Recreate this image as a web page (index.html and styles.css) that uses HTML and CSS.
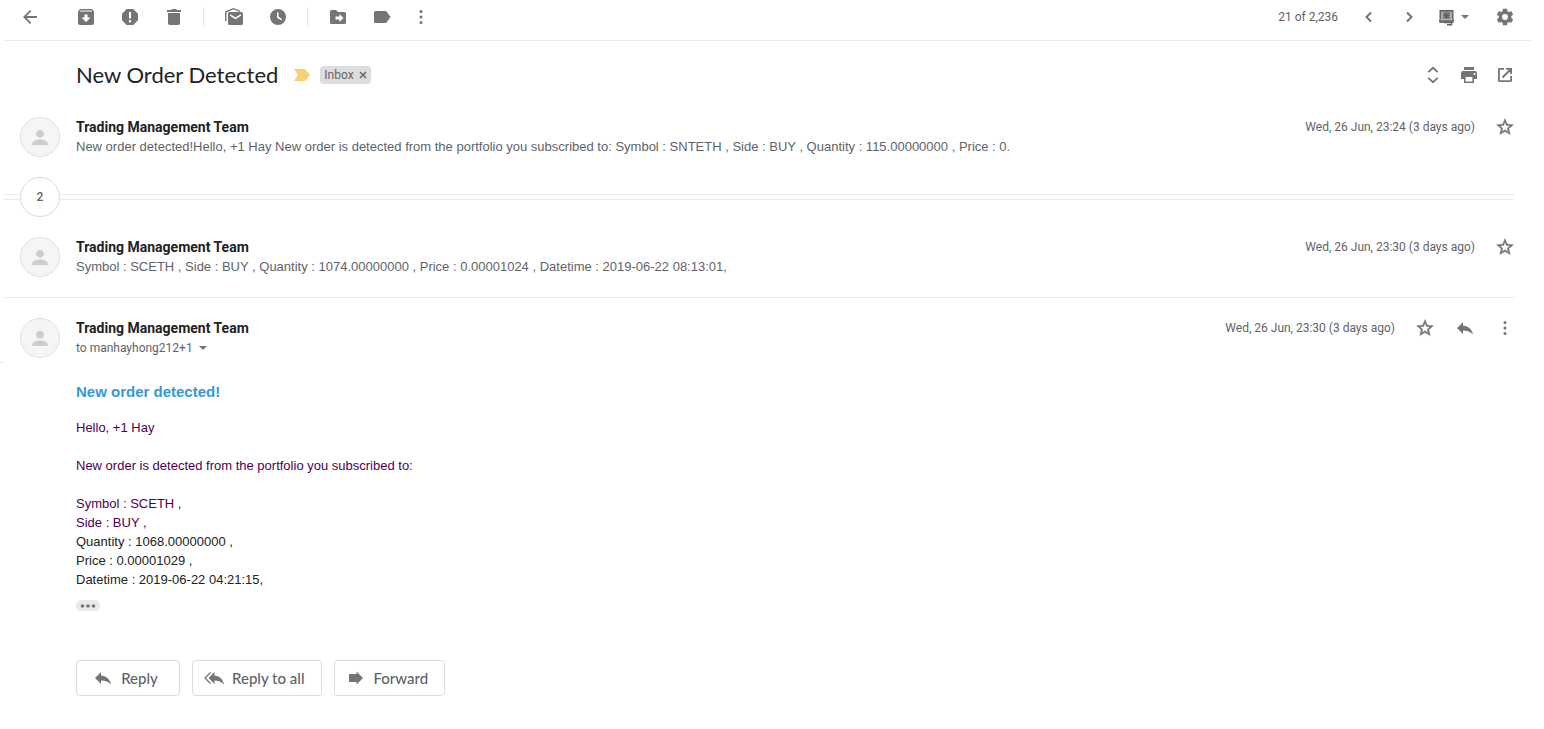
FILE: index.html
```html
<!DOCTYPE html>
<html lang="en">
<head>
  <meta charset="UTF-8" />
  <meta name="viewport" content="width=device-width, initial-scale=1" />
  <title>New Order Detected</title>
  <link rel="stylesheet" href="styles.css">
</head>
<body>
  <!-- shared icons -->
  <svg class="sprite" aria-hidden="true">
    <symbol id="star" viewBox="0 0 24 24"><path stroke="#757575" stroke-width=".6" d="M22 9.240l-7.190-.62L12 2 9.190 8.630 2 9.240l5.460 4.730L5.820 21 12 17.270 18.180 21l-1.630-7.030L22 9.240zM12 15.400l-3.760 2.270 1-4.280-3.320-2.880 4.380-.38L12 6.100l1.710 4.040 4.380.38-3.320 2.880 1 4.280L12 15.400z"/></symbol>
    <symbol id="reply" viewBox="0 0 20 20"><path d="M8 7.500V4L2 10l6 6v-3.600c4.300 0 7.500 1.100 10 4.100-1-4.500-3.700-8.300-10-9z"/></symbol>
    <symbol id="dots" viewBox="0 0 20 20"><circle cx="10" cy="4.500" r="1.500"/><circle cx="10" cy="10" r="1.500"/><circle cx="10" cy="15.500" r="1.500"/></symbol>
    <symbol id="caret" viewBox="0 0 8 4"><path d="M0 0h8L4 4z"/></symbol>
    <symbol id="person" viewBox="0 0 40 40"><circle cx="20" cy="16.500" r="4"/><path d="M12 28.500v-2c0-2.700 5-4 8-4s8 1.300 8 4v2z"/></symbol>
  </svg>

  <header class="toolbar">
    <button class="icon-btn back" aria-label="Back"><svg viewBox="0 0 20 20"><path d="M17 9H6.600l4.700-4.700L10 3l-7 7 7 7 1.300-1.300L6.600 11H17z"/></svg></button>
    <div class="group">
      <button class="icon-btn" aria-label="Archive"><svg viewBox="0 0 20 20"><path fill-rule="evenodd" d="M4 2h12l2 2.500V16a2 2 0 0 1-2 2H4a2 2 0 0 1-2-2V4.500zM4.300 3.500l-.6.9h12.600l-.6-.9zM8.500 7.500v3H5.500L10 15l4.500-4.500h-3v-3z"/></svg></button>
      <button class="icon-btn" aria-label="Report spam"><svg viewBox="0 0 20 20"><path fill-rule="evenodd" d="M6.700 2h6.600L18 6.700v6.600L13.300 18H6.700L2 13.300V6.700zM9 5v6.500h2V5zM10 13a1.300 1.300 0 1 0 0 2.600 1.300 1.300 0 0 0 0-2.600z"/></svg></button>
      <button class="icon-btn" aria-label="Delete"><svg viewBox="0 0 20 20"><path d="M3 3h4l1-1h4l1 1h4v2H3zM4 6h12v10a2 2 0 0 1-2 2H6a2 2 0 0 1-2-2z"/></svg></button>
    </div>
    <div class="group">
      <button class="icon-btn" aria-label="Mark as unread"><svg viewBox="0 0 20 20"><path d="M5.500 5h12A1.500 1.500 0 0 1 19 6.500v10a1.500 1.500 0 0 1-1.500 1.500h-12A1.500 1.500 0 0 1 4 16.500v-10A1.500 1.500 0 0 1 5.500 5z"/><path fill="none" stroke="#fff" stroke-width="1.500" d="M6 7.800l5.500 3.600L17 7.800"/><path fill="none" stroke="#757575" stroke-width="1.400" d="M1.800 14V4.800L9.500 1.700l6.500 2.600"/></svg></button>
      <button class="icon-btn" aria-label="Snooze"><svg viewBox="0 0 20 20"><path fill-rule="evenodd" d="M10 2a8 8 0 1 0 0 16 8 8 0 0 0 0-16zM9 5.500v5.200l4.200 2.600.9-1.300-3.500-2.200V5.500z"/></svg></button>
    </div>
    <div class="group">
      <button class="icon-btn" aria-label="Move to"><svg viewBox="0 0 20 20"><path fill-rule="evenodd" d="M3.500 3H8l2 2h6.500A1.500 1.500 0 0 1 18 6.500v9a1.500 1.500 0 0 1-1.500 1.500h-13A1.500 1.500 0 0 1 2 15.500v-11A1.500 1.500 0 0 1 3.500 3zM11.500 7v2.500H7.500v3h4V15l4-4z"/></svg></button>
      <button class="icon-btn" aria-label="Labels"><svg viewBox="0 0 20 20"><path d="M3.500 4h10q.8 0 1.300.7L18.500 10l-3.700 5.300q-.5.700-1.300.7h-10A1.500 1.500 0 0 1 2 14.500v-9A1.500 1.500 0 0 1 3.500 4z"/></svg></button>
    </div>
    <button class="icon-btn" aria-label="More"><svg><use href="#dots"/></svg></button>
    <div class="pager">
      <span class="count">21 of 2,236</span>
      <button class="icon-btn" aria-label="Newer"><svg viewBox="0 0 20 20"><path fill="none" stroke="#757575" stroke-width="2" d="M12 5.500L7.500 10l4.500 4.500"/></svg></button>
      <button class="icon-btn" aria-label="Older"><svg viewBox="0 0 20 20"><path fill="none" stroke="#757575" stroke-width="2" d="M8 5.500l4.500 4.500L8 14.500"/></svg></button>
      <button class="icon-btn input-tool" aria-label="Input tools"><svg viewBox="0 0 20 20"><path fill="#aaa" d="M4 4h13v8H4z"/><path fill="none" stroke="#616161" stroke-width="1.400" d="M4.200 12.500V3.700h12.600v8.800M7.500 5.500l6 6M13.500 5.500l-6 6M10.500 4v8M7 8.500h7"/><path fill="#757575" d="M3 12.500h15v2.500l-1 1H4l-1-1z"/><path fill="none" stroke="#616161" stroke-width="1.400" d="M8 15.500h7.500v2.200H11"/></svg><svg class="caret"><use href="#caret"/></svg></button>
      <button class="icon-btn" aria-label="Settings"><svg viewBox="0 0 24 24"><path d="M19.430 12.980c.04-.32.07-.64.07-.98s-.03-.66-.07-.98l2.110-1.650c.19-.15.24-.42.12-.64l-2-3.460c-.12-.22-.39-.3-.61-.22l-2.490 1c-.52-.4-1.080-.73-1.690-.98l-.38-2.650C14.460 2.180 14.250 2 14 2h-4c-.25 0-.46.18-.49.42l-.38 2.650c-.61.25-1.170.59-1.690.98l-2.490-1c-.23-.09-.49 0-.61.22l-2 3.460c-.13.22-.07.49.12.64l2.110 1.650c-.04.32-.07.65-.07.98s.03.66.07.98l-2.110 1.650c-.19.15-.24.42-.12.64l2 3.460c.12.22.39.3.61.22l2.490-1c.52.4 1.080.73 1.690.98l.38 2.650c.03.24.24.42.49.42h4c.25 0 .46-.18.49-.42l.38-2.650c.61-.25 1.170-.59 1.690-.98l2.490 1c.23.09.49 0 .61-.22l2-3.460c.12-.22.07-.49-.12-.64zM12 15.500a3.500 3.500 0 1 1 0-7 3.500 3.500 0 0 1 0 7z"/></svg></button>
    </div>
  </header>

  <div class="page">
  <div class="rail"></div>
  <main class="thread">
    <div class="subject">
      <h1>New Order Detected</h1>
      <svg class="important" viewBox="0 0 16 12"><path d="M0 0h11l5 6-5 6H0l4-6z"/></svg>
      <span class="label">Inbox <button aria-label="Remove label"><svg viewBox="0 0 8 8"><path d="M1 1l6 6M7 1L1 7"/></svg></button></span>
      <div class="subject-actions">
        <button class="icon-btn" aria-label="Expand all"><svg viewBox="0 0 20 20"><path fill="none" stroke="#757575" stroke-width="1.800" d="M5.300 7.200L10 2.800l4.700 4.400M5.300 12.800l4.700 4.400 4.700-4.400"/></svg></button>
        <button class="icon-btn" aria-label="Print all"><svg viewBox="0 0 20 20"><path fill-rule="evenodd" d="M5 2h10v3H5zM4 6h12a2 2 0 0 1 2 2v6h-3v4H5v-4H2V8a2 2 0 0 1 2-2zM6.600 12v4.400h6.800V12zM15.500 8a1 1 0 1 0 0 2 1 1 0 0 0 0-2z"/></svg></button>
        <button class="icon-btn" aria-label="In new window"><svg viewBox="0 0 20 20"><path fill="none" stroke="#757575" stroke-width="1.800" d="M9 3.900H4.400q-.5 0-.5.500v11.200q0 .5.500.5h11.200q.5 0 .5-.5V11M11 3.900h5.100V9M16 4l-8.500 8.500"/></svg></button>
      </div>
    </div>

    <article class="message first">
      <svg class="avatar"><use href="#person"/></svg>
      <div class="summary">
        <h2>Trading Management Team</h2>
        <p class="snippet">New order detected!Hello, +1 Hay New order is detected from the portfolio you subscribed to: Symbol : SNTETH , Side : BUY , Quantity : 115.00000000 , Price : 0.</p>
      </div>
      <div class="meta">
        <time>Wed, 26 Jun, 23:24 (3 days ago)</time>
        <button class="icon-btn" aria-label="Star"><svg><use href="#star"/></svg></button>
      </div>
    </article>

    <div class="collapsed">
      <button>2</button>
    </div>

    <article class="message">
      <svg class="avatar"><use href="#person"/></svg>
      <div class="summary">
        <h2>Trading Management Team</h2>
        <p class="snippet">Symbol : SCETH , Side : BUY , Quantity : 1074.00000000 , Price : 0.00001024 , Datetime : 2019-06-22 08:13:01,</p>
      </div>
      <div class="meta">
        <time>Wed, 26 Jun, 23:30 (3 days ago)</time>
        <button class="icon-btn" aria-label="Star"><svg><use href="#star"/></svg></button>
      </div>
    </article>

    <article class="message open">
      <svg class="avatar"><use href="#person"/></svg>
      <div class="summary">
        <h2>Trading Management Team</h2>
        <button class="recipient">to manhayhong212+1 <svg class="caret"><use href="#caret"/></svg></button>
      </div>
      <div class="meta">
        <time>Wed, 26 Jun, 23:30 (3 days ago)</time>
        <button class="icon-btn" aria-label="Star"><svg><use href="#star"/></svg></button>
        <button class="icon-btn" aria-label="Reply"><svg><use href="#reply"/></svg></button>
        <button class="icon-btn" aria-label="More"><svg><use href="#dots"/></svg></button>
      </div>
    </article>

    <div class="content">
      <h3>New order detected!</h3>
      <div class="quoted">
        <p>Hello, +1 Hay</p>
        <p>New order is detected from the portfolio you subscribed to:</p>
        Symbol : SCETH ,<br>
        Side : BUY ,
      </div>
      <div>
        Quantity : 1068.00000000 ,<br>
        Price : 0.00001029 ,<br>
        Datetime : 2019-06-22 04:21:15,
      </div>
      <button class="trimmed" aria-label="Show trimmed content"><svg viewBox="0 0 16 4"><circle cx="2.500" cy="2" r="1.800"/><circle cx="8" cy="2" r="1.800"/><circle cx="13.500" cy="2" r="1.800"/></svg></button>
      <div class="actions">
        <button><svg><use href="#reply"/></svg>Reply</button>
        <button><svg viewBox="0 0 20 20"><path d="M10.500 7.500V4l-6 6 6 6v-3.600c4 0 7 1.100 9.500 4.100-1-4.500-3.500-8.300-9.500-9z"/><path fill="none" stroke="#757575" stroke-width="1.300" d="M6.500 4.500L1 10l5.500 5.500"/></svg>Reply to all</button>
        <button><svg viewBox="0 0 20 20"><path d="M3 6h7.500V3.500L17 10l-6.500 6.500V14H3z"/></svg>Forward</button>
      </div>
    </div>
  </main>
  </div>
</body>
</html>
```
FILE: styles.css
```css
* { box-sizing: border-box; }
body {
  margin: 0;
  background: #fff;
  color: #222;
  font-family: Roboto, sans-serif;
}
h1, h2, h3, p { margin: 0; }
button {
  border: none;
  padding: 0;
  background: none;
  color: inherit;
  font: inherit;
  cursor: pointer;
}
svg {
  display: block;
  fill: #757575;
}
.sprite {
  position: absolute;
  width: 0;
  height: 0;
}
.icon-btn svg {
  width: 20px;
  height: 20px;
}
.caret,
.icon-btn .caret {
  width: 8px;
  height: 4px;
}

/* toolbar */
.toolbar {
  display: flex;
  align-items: center;
  height: 41px;
  margin: 0 13px 0 4px;
  padding: 0 16px 7px;
  border-bottom: 1px solid #ebebeb;
}
.back { margin-right: 24px; }
.group {
  display: flex;
  align-items: center;
  gap: 24px;
  height: 20px;
  padding: 0 19px 0 20px;
  border-left: 1px solid #e5e5e5;
}
.back + .group {
  padding-left: 12px;
  border-left: none;
}
.pager {
  display: flex;
  align-items: center;
  gap: 20px;
  margin-left: auto;
}
.count {
  margin-right: 1px;
  color: #5f6368;
  font-size: 12px;
}
.input-tool {
  display: flex;
  align-items: center;
  gap: 5px;
  margin: 0 6px 0 -3px;
}

/* subject */
.page { display: flex; }
.rail {
  flex: none;
  width: 4px;
  height: 322px;
  border-bottom: 1px solid #ebebeb;
}
.thread {
  flex: 1;
  min-width: 0;
  padding-right: 29px;
}
.subject {
  display: flex;
  align-items: center;
  height: 68px;
  padding-left: 72px;
}
h1 {
  font-family: Lato, sans-serif;
  font-size: 22px;
  font-weight: 400;
  line-height: 28px;
}
.important {
  width: 16px;
  height: 12px;
  margin: 0 10px 0 16px;
  fill: #f7d070;
}
.label {
  display: flex;
  align-items: center;
  gap: 5px;
  height: 18px;
  padding: 0 4px;
  border-radius: 4px;
  background: #ddd;
  color: #666;
  font-size: 12px;
}
.label svg {
  width: 8px;
  height: 8px;
  stroke: #666;
  stroke-width: 1.5;
}
.subject-actions {
  display: flex;
  gap: 16px;
  margin-left: auto;
}

/* messages */
.message {
  display: flex;
  align-items: flex-start;
  height: 80px;
  padding: 20px 0 0 16px;
}
.message.first {
  height: 68px;
  padding-top: 8px;
}
.message.open {
  height: 67px;
  border-top: 1px solid #ebebeb;
}
.avatar {
  width: 40px;
  height: 40px;
  flex: none;
  margin-right: 16px;
  border: 1px solid #e0e0e0;
  border-radius: 50%;
  background: #f5f5f5;
  fill: #ccc;
}
.summary {
  flex: 1;
  min-width: 0;
}
h2 {
  font-size: 14px;
  font-weight: 700;
  line-height: 20px;
}
.snippet {
  overflow: hidden;
  color: #5f6368;
  font: 13px/20px "Liberation Sans", sans-serif;
  white-space: nowrap;
  text-overflow: ellipsis;
}
.meta {
  display: flex;
  align-items: center;
  gap: 20px;
  height: 20px;
  color: #5f6368;
  font-size: 12px;
}
.recipient {
  display: flex;
  align-items: center;
  gap: 6px;
  color: #5f6368;
  font-size: 12px;
  line-height: 20px;
}
.collapsed {
  display: flex;
  align-items: center;
  height: 40px;
  padding-left: 16px;
  background: linear-gradient(#ebebeb 1px, #fff 1px 5px, #ebebeb 5px) center / 100% 6px no-repeat;
}
.collapsed button {
  width: 40px;
  height: 40px;
  border: 1px solid #dadce0;
  border-radius: 50%;
  background: #fff;
  color: #5f6368;
  font-size: 12px;
  font-weight: 500;
}

/* open message */
.content {
  padding: 18px 0 33px 72px;
  font: 13px/19px "Liberation Sans", sans-serif;
}
h3 {
  margin-bottom: 16px;
  color: #3498db;
  font-size: 15px;
  line-height: 20px;
}
.quoted { color: #500050; }
.quoted p { margin-bottom: 19px; }
.trimmed {
  display: flex;
  align-items: center;
  justify-content: center;
  width: 24px;
  height: 11px;
  margin-top: 11px;
  border-radius: 6px;
  background: #e8eaed;
}
.trimmed svg {
  width: 16px;
  height: 4px;
}
.actions {
  display: flex;
  gap: 12px;
  margin-top: 49px;
}
.actions button {
  display: flex;
  align-items: center;
  justify-content: center;
  gap: 8px;
  min-width: 104px;
  height: 36px;
  padding: 0 16px 0 11px;
  border: 1px solid #dadce0;
  border-radius: 4px;
  color: #5f6368;
  font: 500 15px Lato, sans-serif;
}
.actions svg {
  width: 20px;
  height: 20px;
}
```
